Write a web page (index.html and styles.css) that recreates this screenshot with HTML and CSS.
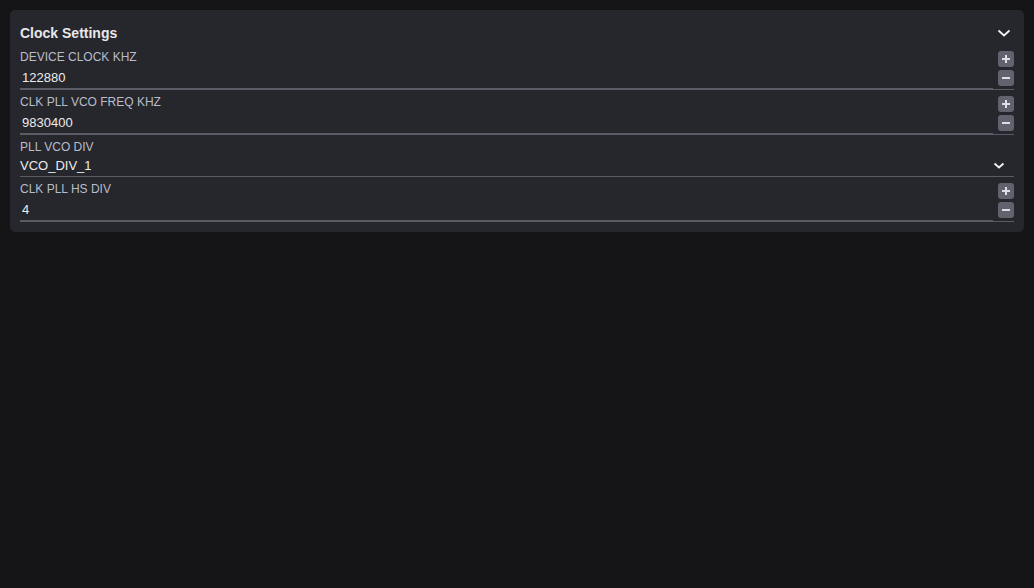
FILE: index.html
```html
<!DOCTYPE HTML>
<html>

<head>
  <meta charset="utf-8">

  <link rel="stylesheet" href="styles.css">

</head>

<body>

  <div class="panel">
    <div class="panel-head">
      <span class="panel-title">Clock Settings</span>
      <svg class="chevron" width="14" height="8" viewBox="0 0 14 8">
        <polyline points="1.5,1.5 7,6.5 12.5,1.5" />
      </svg>
    </div>

    <div class="fields">
      <div class="field">
        <div class="field-main">
          <label class="field-label">DEVICE CLOCK KHZ</label>
          <div class="num-input">122880</div>
        </div>
        <div class="spin">
          <button class="spin-btn"><svg width="8" height="8" viewBox="0 0 8 8"><path d="M4 0v8M0 4h8" /></svg></button>
          <button class="spin-btn"><svg width="8" height="8" viewBox="0 0 8 8"><path d="M0 4h8" /></svg></button>
        </div>
      </div>

      <div class="field">
        <div class="field-main">
          <label class="field-label">CLK PLL VCO FREQ KHZ</label>
          <div class="num-input">9830400</div>
        </div>
        <div class="spin">
          <button class="spin-btn"><svg width="8" height="8" viewBox="0 0 8 8"><path d="M4 0v8M0 4h8" /></svg></button>
          <button class="spin-btn"><svg width="8" height="8" viewBox="0 0 8 8"><path d="M0 4h8" /></svg></button>
        </div>
      </div>

      <div class="field field-select">
        <div class="field-main">
          <label class="field-label">PLL VCO DIV</label>
          <div class="select">
            <span>VCO_DIV_1</span>
            <svg class="chevron small" width="12" height="7" viewBox="0 0 12 7">
              <polyline points="1.5,1.5 6,5.5 10.5,1.5" />
            </svg>
          </div>
        </div>
      </div>

      <div class="field">
        <div class="field-main">
          <label class="field-label">CLK PLL HS DIV</label>
          <div class="num-input">4</div>
        </div>
        <div class="spin">
          <button class="spin-btn"><svg width="8" height="8" viewBox="0 0 8 8"><path d="M4 0v8M0 4h8" /></svg></button>
          <button class="spin-btn"><svg width="8" height="8" viewBox="0 0 8 8"><path d="M0 4h8" /></svg></button>
        </div>
      </div>
    </div>
  </div>

</body>

</html>
```

FILE: styles.css
```css
body {
  margin: 0;
  padding: 10px;
  height: 588px;
  box-sizing: border-box;
  background: #151517;
  font-family: "Liberation Sans", Arial, sans-serif;
}

.panel {
  background: #26262d;
  border-radius: 5px;
  padding: 13px 10px 10px;
}

.panel-head {
  display: flex;
  align-items: center;
  justify-content: space-between;
  height: 20px;
  margin-bottom: 6px;
}

.panel-title {
  font-size: 14px;
  font-weight: bold;
  line-height: 20px;
  color: #e8e8ea;
}

.chevron {
  fill: none;
  stroke: #f2f2f2;
  stroke-width: 1.8;
  margin-right: 3px;
}

.chevron.small {
  margin-right: 9px;
}

.fields {
  display: flex;
  flex-direction: column;
  gap: 4px;
}

.field {
  display: flex;
}

.field-main {
  flex: 1;
  display: flex;
  flex-direction: column;
}

.field-label {
  font-size: 12px;
  line-height: 16px;
  color: #b9bdc9;
}

.num-input {
  box-sizing: border-box;
  height: 25px;
  padding: 4px 2px 0;
  font-size: 13px;
  line-height: 18px;
  color: #ececee;
  border-bottom: 2px solid #5b5b67;
}

.spin {
  width: 21px;
  display: flex;
  flex-direction: column;
  align-items: flex-end;
  padding-top: 2px;
  gap: 3px;
  border-bottom: 1px solid #5b5b67;
}

.spin-btn {
  width: 16px;
  height: 16px;
  padding: 0;
  border: none;
  border-radius: 3px;
  background: #62626f;
  display: flex;
  align-items: center;
  justify-content: center;
}

.spin-btn svg {
  stroke: #dedee4;
  stroke-width: 2;
}

.select {
  box-sizing: border-box;
  height: 22px;
  padding-top: 3px;
  display: flex;
  align-items: flex-start;
  justify-content: space-between;
  font-size: 13px;
  line-height: 15px;
  color: #ececee;
  border-bottom: 1px solid #5b5b67;
}

.select .chevron {
  margin-top: 4px;
}
```
